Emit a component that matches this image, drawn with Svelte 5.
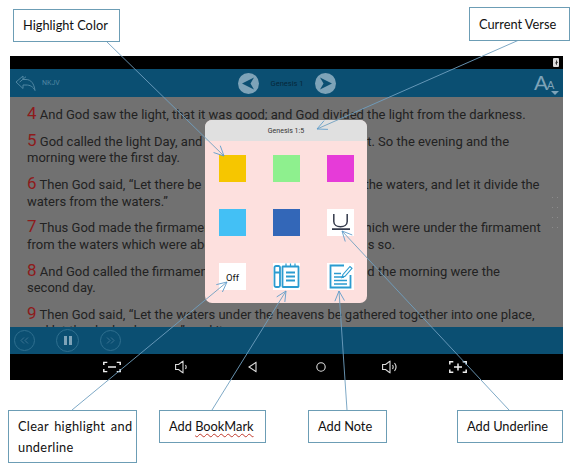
<script>
  const verses = [
    { n: 4, lines: ["And God saw the light, that it was good; and God divided the light from the darkness."] },
    { n: 5, lines: ["God called the light Day, and the darkness He called Night. So the evening and the", "morning were the first day."] },
    { n: 6, lines: ["Then God said, “Let there be a firmament in the midst of the waters, and let it divide the", "waters from the waters.”"] },
    { n: 7, lines: ["Thus God made the firmament, and divided the waters which were under the firmament", "from the waters which were above the firmament; and it was so."] },
    { n: 8, lines: ["And God called the firmament Heaven. So the evening and the morning were the", "second day."] },
    { n: 9, lines: ["Then God said, “Let the waters under the heavens be gathered together into one place,", "and let the dry land appear”; and it was so."] },
  ];

  const swatches = ["#f6c600", "#8ef08e", "#e63bd8", "#43c0f5", "#3367b8"];

  const arrows = [
    { x1: 106, y1: 41, x2: 224, y2: 156 },
    { x1: 519, y1: 40, x2: 317, y2: 129 },
    { x1: 72, y1: 410, x2: 227, y2: 282 },
    { x1: 212, y1: 410, x2: 286, y2: 291 },
    { x1: 347, y1: 410, x2: 339, y2: 291 },
    { x1: 509, y1: 410, x2: 342, y2: 231 },
  ];

  // two barbs of an open arrow head at the end of a leader line
  const head = (a) => {
    const t = Math.atan2(a.y2 - a.y1, a.x2 - a.x1);
    const len = 11;
    const p = (d) => `${a.x2 - len * Math.cos(t + d)},${a.y2 - len * Math.sin(t + d)}`;
    return `${p(0.45)} ${a.x2},${a.y2} ${p(-0.45)}`;
  };
</script>

<div class="canvas">
  <div class="screen">
    <div class="status">
      <svg width="6" height="9" viewBox="0 0 6 9"><rect width="6" height="9" rx="1" fill="#ddd" /><path d="M3 1.500v3l-1 0 2 3v-2.500h1z" fill="#333" /></svg>
    </div>

    <header class="topbar">
      <div class="back">
        <svg width="21" height="17" viewBox="0 0 21 17" fill="none" stroke="#4f86a2" stroke-width="1">
          <path d="M1 7 8 1v3.500h3c5 0 8 4 9 11-2-4-5-5.500-9-5.500H8v3.500zM4.500 7.200l6.500-5.500" />
        </svg>
        <span>NKJV</span>
      </div>
      <div class="chapter">
        <svg width="21" height="21" viewBox="0 0 21 21"><circle cx="10.500" cy="10.500" r="10.500" fill="#7ea3b8" /><path d="M16 4.500 4 10.500l12 6-3.500-6z" fill="#0b4f72" /></svg>
        <span>Genesis 1</span>
        <svg width="21" height="21" viewBox="0 0 21 21"><circle cx="10.500" cy="10.500" r="10.500" fill="#7ea3b8" /><path d="M5 4.500l12 6-12 6 3.500-6z" fill="#0b4f72" /></svg>
      </div>
      <div class="font-size">
        <span class="big">A</span><span class="small">A</span>
        <i></i>
      </div>
    </header>

    <main class="reader">
      {#each verses as v}
        <p>
          <b>{v.n}</b> {v.lines[0]}<br />{v.lines[1] ?? ""}
        </p>
      {/each}
      <div class="grip"><i></i><i></i><i></i><i></i></div>
    </main>

    <div class="player">
      <span class="round"><svg width="9" height="7" viewBox="0 0 9 7" fill="none" stroke="#3b7391"><path d="M4 .5 1 3.500l3 3M8 .5 5 3.500l3 3" /></svg></span>
      <span class="round pause"><i></i><i></i></span>
      <span class="round"><svg width="9" height="7" viewBox="0 0 9 7" fill="none" stroke="#3b7391"><path d="M1 .5l3 3-3 3M5 .5l3 3-3 3" /></svg></span>
    </div>

    <nav class="navbar">
      <svg class="ic1" width="18" height="11" viewBox="0 0 18 11" fill="none" stroke="#eee" stroke-width="1.500">
        <path d="M.8 3.500V.8h3.500M13.700.8h3.500v2.700M.8 7.500v2.700h3.500M13.700 10.200h3.500V7.500M5 5.500h8" />
      </svg>
      <svg class="ic2" width="14" height="13" viewBox="0 0 14 13" fill="none" stroke="#ddd" stroke-width="1.100">
        <path d="M.6 4v5h3l4.400 3.400V.6L3.600 4zM10.500 4.500c.8 1.200.8 2.800 0 4" />
      </svg>
      <svg class="ic3" width="9" height="11" viewBox="0 0 9 11" fill="none" stroke="#ddd" stroke-width="1.100">
        <path d="M8 .8v9.400L1 5.500z" />
      </svg>
      <svg class="ic4" width="10" height="10" viewBox="0 0 10 10" fill="none" stroke="#ddd" stroke-width="1.100">
        <circle cx="5" cy="5" r="4.200" />
      </svg>
      <svg class="ic5" width="17" height="13" viewBox="0 0 17 13" fill="none" stroke="#ddd" stroke-width="1.100">
        <path d="M.6 4v5h3l4.400 3.400V.6L3.600 4zM10.500 4.500c.8 1.200.8 2.800 0 4M12.500 2.500c1.800 2.300 1.800 5.700 0 8" />
      </svg>
      <svg class="ic6" width="18" height="12" viewBox="0 0 18 12" fill="none" stroke="#eee" stroke-width="1.500">
        <path d="M.8 3.500V.8h3.500M13.700.8h3.500v2.700M.8 8.500v2.700h3.500M13.700 11.200h3.500V8.500M5 6h8M9 2.500v7" />
      </svg>
    </nav>
  </div>

  <div class="popup">
    <div class="popup-title">Genesis 1:5</div>
    <div class="popup-grid">
      {#each swatches as c}
        <span class="swatch" style="background: {c}"></span>
      {/each}
      <span class="swatch tile">
        <svg width="27" height="27" viewBox="0 0 27 27" fill="none" stroke="#33394a" stroke-width="1.500">
          <path d="M6.800 5v7.500c0 7 13.400 7 13.400 0V5" />
          <path d="M5 20.200h18" stroke-width="1.800" />
        </svg>
      </span>
      <span class="swatch tile off">Off</span>
      <span class="swatch tile">
        <svg width="27" height="27" viewBox="0 0 27 27" fill="none" stroke="#2b9bd0" stroke-width="1.800">
          <rect x="1.500" y="3" width="5.500" height="21" rx="1.500" />
          <path d="M1.500 9.500h5.500" />
          <rect x="9.500" y="3.500" width="16" height="20.500" rx="0.500" />
          <path d="M13 .5v3M17.500 .5v3M22 .5v3" stroke-width="1.200" />
          <path d="M13 9.500h9M13 13.500h9M13 17.500h9" />
        </svg>
      </span>
      <span class="swatch tile">
        <svg width="27" height="27" viewBox="0 0 27 27" fill="none" stroke="#2b9bd0" stroke-width="1.800">
          <path d="M17 2.500H3.500v22h20V12" />
          <path d="M7 10.500h7M7 14h10M7 17.500h13M7 21h13" stroke-width="1.700" />
          <path d="M15 14.500l1-3 7-8 2 1.800-7 8z" stroke-width="1.100" />
        </svg>
      </span>
    </div>
  </div>

  <svg class="arrows" width="572" height="468" viewBox="0 0 572 468" fill="none">
    {#each arrows as a}
      <line x1={a.x1} y1={a.y1} x2={a.x2} y2={a.y2} stroke="#6f9fc0" stroke-width="0.900" />
      <polyline points={head(a)} stroke="#5f9ccb" stroke-width="0.900" />
    {/each}
  </svg>

  <div class="note highlight"><span>Highlight Color</span></div>
  <div class="note verse"><span>Current Verse</span></div>
  <div class="note clear"><span class="spaced">Clear highlight and<br />underline</span></div>
  <div class="note bookmark"><span>Add <span class="squiggle">BookMark</span></span></div>
  <div class="note addnote"><span>Add Note</span></div>
  <div class="note underline"><span>Add Underline</span></div>
</div>

<style>
  :global(body) {
    background: #fff;
  }

  .canvas {
    position: relative;
    width: 572px;
    height: 468px;
    overflow: hidden;
    padding: 56px 9px 0 10px;
    box-sizing: border-box;
    font-family: Roboto, sans-serif;
  }

  .screen {
    display: flex;
    flex-direction: column;
    height: 324px;
    background: #717171;
  }

  .status {
    height: 13px;
    background: #000;
    display: flex;
    justify-content: flex-end;
    align-items: center;
    padding-right: 4px;
  }

  .topbar {
    height: 28px;
    background: #0b4f72;
    display: grid;
    grid-template-columns: 1fr auto 1fr;
    align-items: center;
    padding: 0 5px;
  }

  .back {
    display: flex;
    align-items: center;
    gap: 6px;
    color: #4f86a2;
    font-size: 7px;
  }

  .chapter {
    display: flex;
    align-items: center;
    gap: 12px;
    color: #06283a;
    font-size: 7.500px;
    margin-left: 1px;
  }

  .font-size {
    position: relative;
    justify-self: end;
    height: 28px;
    width: 22px;
    color: #7ea3b8;
    font-family: "Liberation Sans", sans-serif;
  }

  .font-size .big {
    position: absolute;
    left: -2px;
    top: 2px;
    font-size: 21px;
  }

  .font-size .small {
    position: absolute;
    left: 11px;
    top: 10px;
    font-size: 11px;
  }

  .font-size i {
    position: absolute;
    right: -1px;
    bottom: 2px;
    border-left: 4px solid transparent;
    border-right: 4px solid transparent;
    border-top: 4px solid #7ea3b8;
  }

  .reader {
    position: relative;
    flex: 1;
    min-height: 0;
    overflow: hidden;
    padding: 10px 0 0 17px;
    color: #222;
    font-size: 13px;
    line-height: 16.500px;
  }

  .reader p {
    margin: 0 0 10.300px;
    white-space: nowrap;
  }

  .reader b {
    color: #8e1b1b;
    font-weight: 400;
    font-size: 17px;
    line-height: 0;
  }

  .grip {
    position: absolute;
    right: 5px;
    top: 99px;
    display: flex;
    flex-direction: column;
    gap: 7px;
  }

  .grip i {
    display: block;
    width: 8px;
    height: 3px;
    background: radial-gradient(circle, #8c8c8c 0.8px, transparent 1px) 0 0 / 5px 3px;
  }

  .player {
    height: 27px;
    background: #0b4f72;
    display: flex;
    align-items: center;
    gap: 22px;
    padding-left: 4px;
  }

  .round {
    width: 19px;
    height: 19px;
    border: 1px solid #2f6f8f;
    border-radius: 50%;
    display: flex;
    align-items: center;
    justify-content: center;
    gap: 2px;
  }

  .pause {
    width: 21px;
    height: 21px;
    margin-left: -1px;
    margin-right: -1px;
  }

  .pause i {
    width: 3px;
    height: 9px;
    background: #7ea3b8;
  }

  .navbar {
    flex: none;
    height: 26px;
    background: #000;
    position: relative;
  }

  .navbar svg {
    position: absolute;
    top: 50%;
    transform: translateY(-50%);
  }

  .ic1 { left: 93px; }
  .ic2 { left: 165px; }
  .ic3 { left: 238px; }
  .ic4 { left: 306px; }
  .ic5 { left: 372px; }
  .ic6 { left: 439px; }

  .popup {
    position: absolute;
    left: 205px;
    top: 120px;
    width: 162px;
    height: 183px;
    background: #fde0de;
    border-radius: 7px;
    overflow: hidden;
  }

  .popup-title {
    height: 21px;
    background: #e0e0e0;
    color: #333;
    font-size: 7px;
    display: flex;
    align-items: center;
    justify-content: center;
  }

  .popup-grid {
    display: grid;
    grid-template-columns: repeat(3, 27px);
    grid-auto-rows: 27px;
    gap: 27px;
    padding: 14px 0 0 14px;
  }

  .swatch {
    display: block;
  }

  .tile {
    background: #fff;
    display: flex;
    align-items: center;
    justify-content: center;
  }

  .off {
    font-size: 9.500px;
    color: #111;
    padding-top: 1px;
    box-sizing: border-box;
  }

  .arrows {
    position: absolute;
    left: 0;
    top: 0;
  }

  .note {
    position: absolute;
    box-sizing: border-box;
    background: #fff;
    border: 1px solid #6c9db5;
    color: #111;
    font-family: Lato, sans-serif;
    font-size: 12.800px;
    line-height: 21px;
    display: flex;
    align-items: center;
    padding-left: 9px;
    white-space: nowrap;
  }

  .spaced {
    word-spacing: 2px;
    letter-spacing: 0.3px;
    padding-top: 1px;
  }

  .highlight { left: 13px; top: 9px; width: 107px; height: 33px; }
  .verse { left: 469px; top: 7px; width: 101px; height: 34px; }
  .clear { left: 8px; top: 410px; width: 129px; height: 53px; }
  .bookmark { left: 159px; top: 410px; width: 107px; height: 33px; }
  .addnote { left: 308px; top: 410px; width: 79px; height: 33px; }
  .underline { left: 457px; top: 410px; width: 106px; height: 33px; }

  .squiggle {
    text-decoration: underline wavy #c0392b 1px;
    text-underline-offset: 2px;
  }
</style>
